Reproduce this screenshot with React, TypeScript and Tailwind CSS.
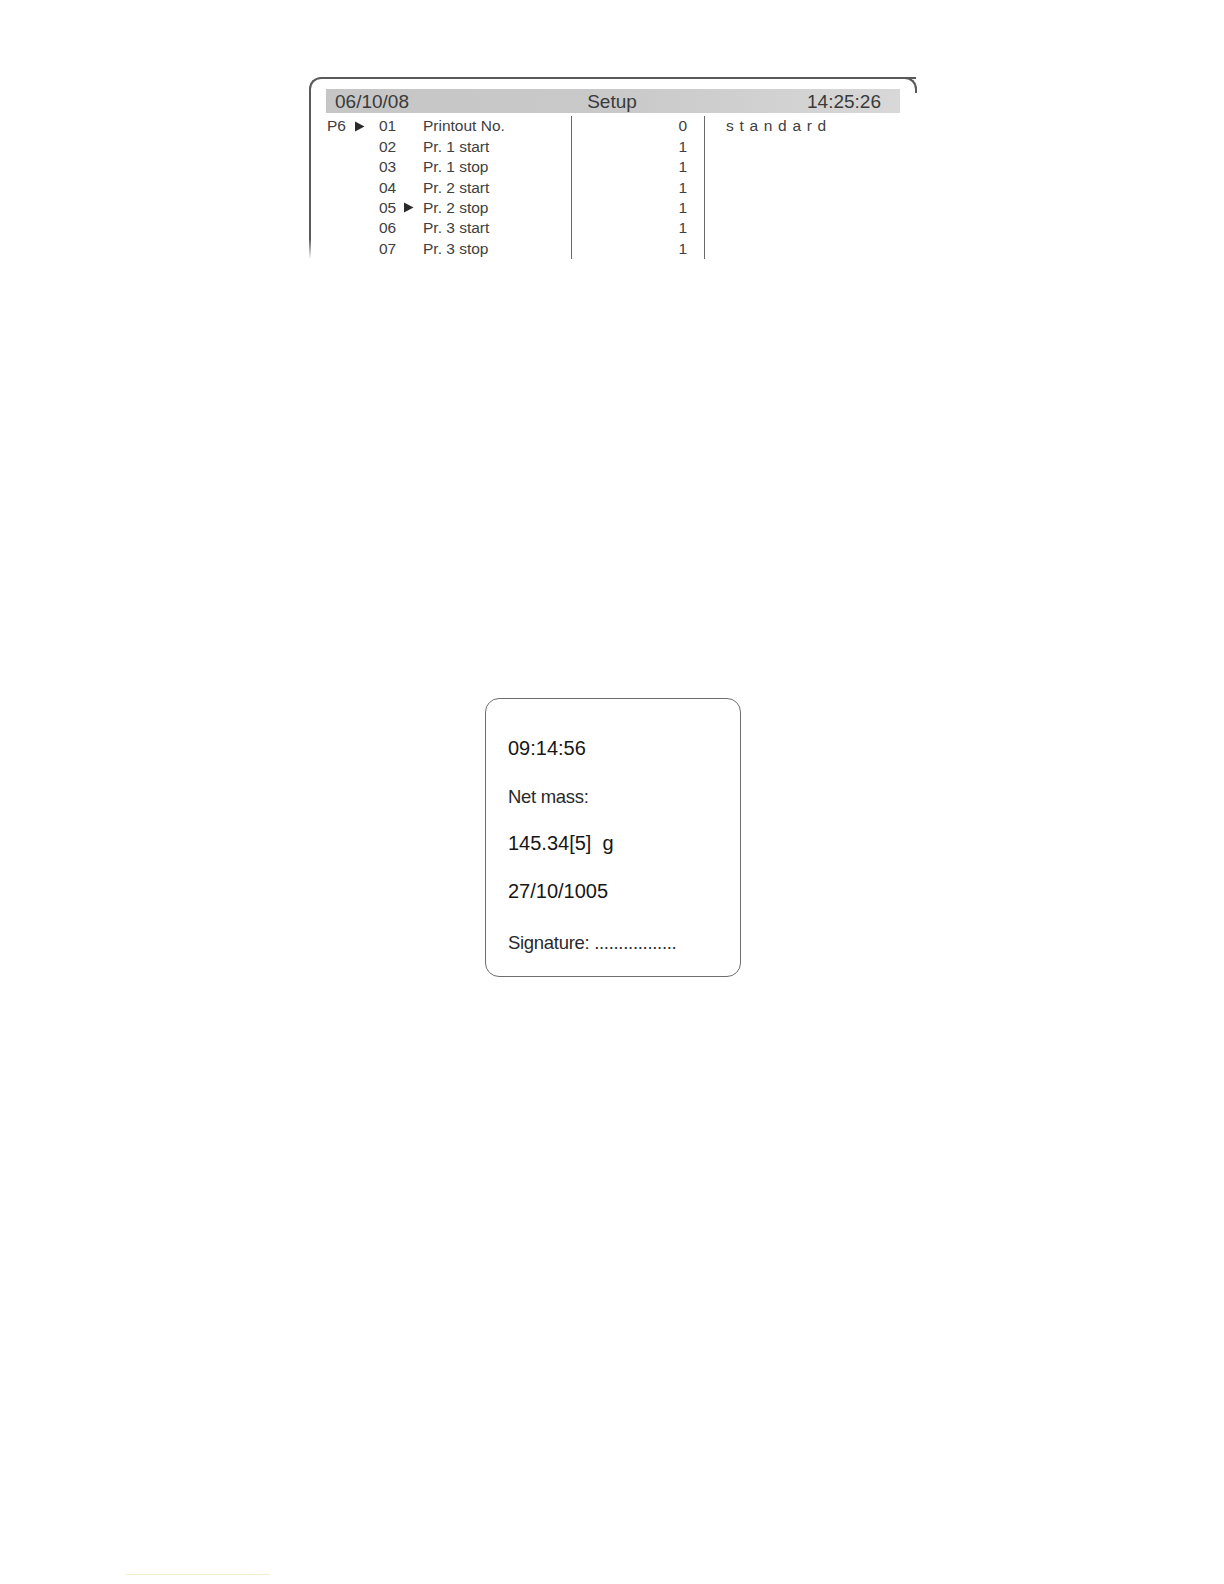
import React from "react";

const rows = [
  { no: "01", label: "Printout No.", value: "0", extra: "standard", lead: true },
  { no: "02", label: "Pr. 1 start", value: "1" },
  { no: "03", label: "Pr. 1 stop", value: "1" },
  { no: "04", label: "Pr. 2 start", value: "1" },
  { no: "05", label: "Pr. 2 stop", value: "1", marked: true },
  { no: "06", label: "Pr. 3 start", value: "1" },
  { no: "07", label: "Pr. 3 stop", value: "1" },
];

function Arrow() {
  return (
    <svg width="11" height="11" viewBox="0 0 11 11" className="inline-block">
      <path d="M1 0.5 L10.5 5.5 L1 10.5 Z" fill="#2a2a2a" />
    </svg>
  );
}

function SetupScreen() {
  return (
    <div className="relative ml-[309px] w-[607px] h-[182px] border-l-2 border-t-2 border-[#5a5a5a] rounded-tl-[12px] pt-[10px] text-[#3a3a3a]">
      {/* top-right bend of the frame */}
      <div className="absolute -top-[2px] -right-[1px] w-[14px] h-[16px] border-t-2 border-r-2 border-[#5a5a5a] rounded-tr-[12px]" />
      {/* fade the left edge at bottom */}
      <div className="absolute -left-[2px] bottom-0 w-[3px] h-[20px] bg-gradient-to-b from-transparent to-white" />

      <div className="ml-[15px] mr-[16px] h-[24px] flex items-center justify-between pl-[9px] pr-[19px] bg-gradient-to-r from-[#c6c6c6] via-[#c9c9c9] to-[#d8d8d8] text-[19px] leading-none">
        <span>06/10/08</span>
        <span className="ml-[8px]">Setup</span>
        <span>14:25:26</span>
      </div>

      <div className="mt-[3px] text-[15.5px] text-[#404040]">
        {rows.map((r) => (
          <div key={r.no} className="flex h-[20.4px] items-center leading-none">
            <div className="w-[68px] pl-[16px] flex items-center gap-[8px]">
              {r.lead && (
                <>
                  <span>P6</span>
                  <Arrow />
                </>
              )}
            </div>
            <div className="w-[44px] flex items-center gap-[7px]">
              <span>{r.no}</span>
              {r.marked && <Arrow />}
            </div>
            <div className="w-[148px]">{r.label}</div>
            <div className="w-[133px] h-full flex items-center justify-end pr-[17px] border-l border-[#6a6a6a]">
              {r.value}
            </div>
            <div className="h-full flex items-center pl-[21px] border-l border-[#6a6a6a] tracking-[5.7px]">
              {r.extra}
            </div>
          </div>
        ))}
      </div>
    </div>
  );
}

function Receipt() {
  return (
    <div className="ml-[485px] mt-[439px] w-[256px] h-[279px] border border-[#6e6e6e] rounded-[14px] pl-[22px] pt-[38px] text-[#161616]">
      <div className="text-[20px] leading-[23px]">09:14:56</div>
      <div className="mt-[26px] text-[18.5px] leading-[22px] font-light tracking-[-0.3px] text-[#2a2a2a]">Net mass:</div>
      <div className="mt-[24px] text-[20px] leading-[23px] whitespace-pre">145.34[5]  g</div>
      <div className="mt-[25px] text-[20px] leading-[23px]">27/10/1005</div>
      <div className="mt-[29px] text-[18.5px] leading-[22px] font-light tracking-[-0.3px] text-[#2a2a2a]">
        Signature: .................
      </div>
    </div>
  );
}

export default function App() {
  return (
    <div
      className="relative w-[1224px] h-[1584px] bg-white overflow-hidden pt-[77px]"
      style={{ fontFamily: '"Liberation Sans", Arial, sans-serif' }}
    >
      <SetupScreen />
      <Receipt />
      <div className="ml-[126px] mt-[597px] w-[144px] h-px bg-[#f3efcf]" />
    </div>
  );
}
